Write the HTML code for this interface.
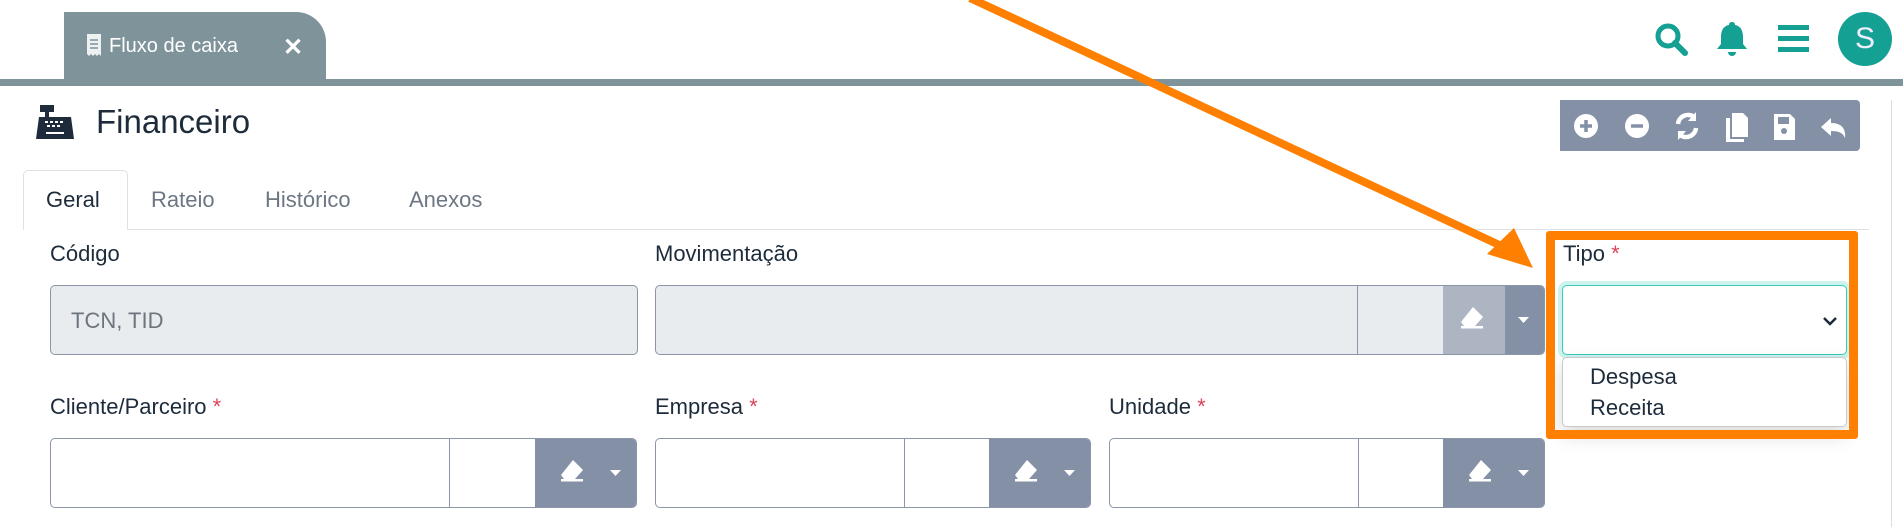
<!DOCTYPE html>
<html><head><meta charset="utf-8">
<style>
*{box-sizing:border-box;margin:0;padding:0}
body{width:1903px;height:527px;position:relative;background:#fff;overflow:hidden;font-family:"Liberation Sans",sans-serif;color:#1d2b3a}
.a{position:absolute}
.lbl{position:absolute;font-size:22px;color:#1d2b3a;line-height:26px}
.lbl .r{color:#e0435a}
.inp{position:absolute;border:1px solid #8a96a8;border-radius:5px;background:#fff;overflow:hidden}
.dv{position:absolute;top:0;bottom:0;width:1px;background:#8a96a8}
.btn{position:absolute;top:0;bottom:0;background:#8390a6}
.tab{position:absolute;font-size:22px;color:#6c7783;top:187px}
</style></head><body>
<div class="a" style="left:64px;top:12px;width:262px;height:70px;background:#7f939b;border-radius:0 30px 0 0"></div>
<svg class="a" style="left:86px;top:34px" width="16" height="22" viewBox="0 0 16 22"><path d="M1 0h14v22l-2-2-2 2-2-2-2 2-2-2-2 2-2-2z" fill="#eef1f2"/><path d="M4 6h8M4 10h8M4 14h8" stroke="#7f939b" stroke-width="1.5"/></svg>
<div class="a" style="left:109px;top:35px;font-size:20px;color:#fff">Fluxo de caixa</div>
<div class="a" style="left:283px;top:33px;font-size:24px;color:#fff;font-weight:bold">✕</div>
<div class="a" style="left:0;top:79px;width:1903px;height:7px;background:#7f939b"></div>
<svg class="a" style="left:1654px;top:22px" width="36" height="36" viewBox="0 0 36 36"><circle cx="14" cy="14" r="10" fill="none" stroke="#14a093" stroke-width="5"/><path d="M21 21l10 10" stroke="#14a093" stroke-width="6" stroke-linecap="round"/></svg>
<svg class="a" style="left:1716px;top:20px" width="32" height="38" viewBox="0 0 32 38"><path d="M16 2c2 0 3 1 3 3 6 1 8 6 8 12v7l4 5H1l4-5v-7c0-6 2-11 8-12 0-2 1-3 3-3z" fill="#14a093"/><path d="M12 32h8a4 4 0 0 1-8 0z" fill="#14a093"/></svg>
<svg class="a" style="left:1778px;top:24px" width="32" height="30"><rect y="1" width="31" height="5" fill="#14a093"/><rect y="12" width="31" height="5" fill="#14a093"/><rect y="23" width="31" height="5" fill="#14a093"/></svg>
<div class="a" style="left:1838px;top:12px;width:54px;height:54px;border-radius:50%;background:#14a093;color:#eef;font-size:30px;text-align:center;line-height:54px">S</div>
<svg class="a" style="left:36px;top:105px" width="38" height="34" viewBox="0 0 38 34"><rect x="4" y="0" width="14" height="7" fill="#1d2b3a"/><rect x="9" y="7" width="4" height="5" fill="#1d2b3a"/><path d="M3 12h32l3 22H0z" fill="#1d2b3a"/><g fill="#fff"><rect x="9" y="16" width="3" height="2"/><rect x="14" y="16" width="3" height="2"/><rect x="19" y="16" width="3" height="2"/><rect x="24" y="16" width="3" height="2"/><rect x="11" y="20" width="3" height="2"/><rect x="16" y="20" width="3" height="2"/><rect x="21" y="20" width="3" height="2"/><rect x="10" y="27" width="18" height="2"/></g></svg>
<div class="a" style="left:96px;top:103px;font-size:33px;color:#1d2b3a">Financeiro</div>
<div class="a" style="left:1560px;top:100px;width:300px;height:51px;background:#8390a6;border-radius:0 4px 4px 0"></div>
<svg class="a" style="left:1560px;top:100px" width="300" height="51" viewBox="0 0 300 51">
<g fill="#fff">
<circle cx="26" cy="26" r="12"/><circle cx="77" cy="26" r="12"/>
<path d="M172 13h11l5 5v19h-16z"/><path d="M166 18h4v21h14v3h-18z"/>
<path d="M214 14h16l5 5v21h-21zM218 17v7h11v-7z"/>
<path d="M261 27l10-9v5c10 0 15 5 14 15-2-5-6-7-14-7v5z"/>
<path d="M136 12v9h-8z M118 40v-9h8z"/>
</g>
<path d="M20 26h12M26 20v12" stroke="#8390a6" stroke-width="3.5"/>
<path d="M71 26h12" stroke="#8390a6" stroke-width="3.5"/>
<circle cx="224" cy="31" r="3" fill="#8390a6"/>
<g fill="none" stroke="#fff" stroke-width="4.5">
<path d="M118 24a10 10 0 0 1 16-7"/><path d="M136 28a10 10 0 0 1-16 7"/>
</g>
</svg>
<div class="a" style="left:24px;top:229px;width:1845px;height:1px;background:#dee2e6"></div>
<div class="a" style="left:23px;top:170px;width:105px;height:60px;border:1px solid #dee2e6;border-bottom:none;border-radius:5px 5px 0 0;background:#fff"></div>
<div class="tab" style="left:46px;color:#1d2b3a">Geral</div>
<div class="tab" style="left:151px">Rateio</div>
<div class="tab" style="left:265px">Histórico</div>
<div class="tab" style="left:409px">Anexos</div>
<div class="lbl" style="left:50px;top:241px">Código</div>
<div class="lbl" style="left:655px;top:241px">Movimentação</div>
<div class="inp" style="left:50px;top:285px;width:588px;height:70px;background:#e8ecef"><div class="a" style="left:20px;top:22px;font-size:22px;color:#6c757d">TCN, TID</div></div>
<div class="inp" style="left:655px;top:285px;width:890px;height:70px;background:#e8ecef">
<div class="dv" style="left:701px"></div>
<div class="btn" style="left:787px;width:62px;background:#adb5c2"></div>
<div class="btn" style="left:849px;width:41px"></div>
</div>
<div class="lbl" style="left:50px;top:394px">Cliente/Parceiro <span class="r">*</span></div>
<div class="lbl" style="left:655px;top:394px">Empresa <span class="r">*</span></div>
<div class="lbl" style="left:1109px;top:394px">Unidade <span class="r">*</span></div>
<div class="inp" style="left:50px;top:438px;width:587px;height:70px"><div class="dv" style="left:398px"></div><div class="btn" style="left:484px;width:103px"></div></div>
<div class="inp" style="left:655px;top:438px;width:436px;height:70px"><div class="dv" style="left:248px"></div><div class="btn" style="left:333px;width:103px"></div></div>
<div class="inp" style="left:1109px;top:438px;width:436px;height:70px"><div class="dv" style="left:248px"></div><div class="btn" style="left:333px;width:103px"></div></div>
<svg class="a" style="left:0;top:0" width="1903" height="527">
<g fill="#fff">
<g transform="translate(1461,307)"><path d="M12 0l10 10-8 9h-11l-3-4z"/><rect x="0" y="19" width="22" height="2.5"/></g>
<g transform="translate(561,460)"><path d="M12 0l10 10-8 9h-11l-3-4z"/><rect x="0" y="19" width="22" height="2.5"/></g>
<g transform="translate(1015,460)"><path d="M12 0l10 10-8 9h-11l-3-4z"/><rect x="0" y="19" width="22" height="2.5"/></g>
<g transform="translate(1469,460)"><path d="M12 0l10 10-8 9h-11l-3-4z"/><rect x="0" y="19" width="22" height="2.5"/></g>
<path d="M1518 317h11l-5.5 6z"/><path d="M610 470h11l-5.5 6z"/><path d="M1064 470h11l-5.5 6z"/><path d="M1518 470h11l-5.5 6z"/>
</g>
</svg>
<div class="lbl" style="left:1563px;top:241px">Tipo <span class="r">*</span></div>
<div class="a" style="left:1562px;top:285px;width:285px;height:70px;border:1px solid #3cc9b8;border-radius:5px;box-shadow:0 0 0 4px #cdf3ef;background:#fff"></div>
<svg class="a" style="left:1822px;top:315px" width="16" height="12"><path d="M2 3l6 6 6-6" fill="none" stroke="#1d2b3a" stroke-width="2.5"/></svg>
<div class="a" style="left:1562px;top:357px;width:285px;height:70px;border:1px solid #c9c9c9;border-radius:5px;background:#fff;box-shadow:0 8px 20px rgba(0,0,0,.15)"></div>
<div class="a" style="left:1590px;top:361px;font-size:22px;line-height:31px">Despesa<br>Receita</div>
<div class="a" style="left:1546px;top:231px;width:312px;height:208px;border:9px solid #ff8000;border-radius:3px"></div>
<div class="a" style="left:1891px;top:100px;width:1px;height:427px;background:#ddd"></div>
<svg class="a" style="left:0;top:0" width="1903" height="527">
<path d="M970 -2L1510 250" stroke="#ff8000" stroke-width="8"/>
<path d="M1533 268L1487 254L1514 228z" fill="#ff8000"/>
</svg>
</body></html>
